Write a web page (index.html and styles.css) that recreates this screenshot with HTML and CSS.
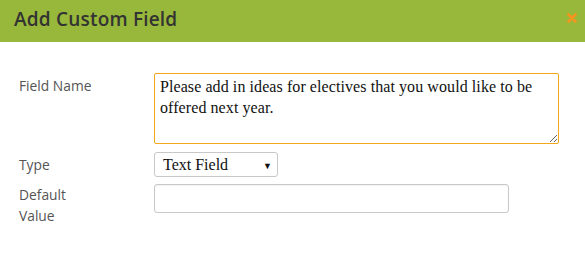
FILE: index.html
```html
<!DOCTYPE html>
<html lang="en">
<head>
    <meta charset="UTF-8">
    <title>Add Custom Field</title>
    <link rel="stylesheet" href="styles.css">
</head>
<body>
    <div class="modal">
        <div class="modal-header">
            <h1>Add Custom Field</h1>
            <svg class="close" width="10" height="10" viewBox="0 0 10 10">
                <path d="M1.5 1.5 L8.5 8.5 M8.5 1.5 L1.5 8.5" stroke="#f7941d" stroke-width="2.6" stroke-linecap="round"/>
            </svg>
        </div>

        <form class="modal-body">
            <label class="field-label" for="field-name">Field Name</label>
            <textarea id="field-name" class="field-name">Please add in ideas for electives that you would like to be offered next year.</textarea>

            <label class="field-label" for="field-type">Type</label>
            <div class="select-wrap">
                <select id="field-type" class="field-type">
                    <option>Text Field</option>
                    <option>Checkbox</option>
                    <option>Dropdown</option>
                </select>
            </div>

            <label class="field-label" for="default-value">Default Value</label>
            <input id="default-value" class="default-value" type="text">
        </form>
    </div>
</body>
</html>
```

FILE: styles.css
```css
* {
    margin: 0;
    padding: 0;
    box-sizing: border-box;
}

body {
    font-family: 'Open Sans', Lato, sans-serif;
    background: white;
    width: 585px;
    height: 256px;
    overflow: hidden;
}

.modal-header {
    height: 42px;
    background: #97b83a;
    padding: 0 8px 0 14px;
    display: flex;
    align-items: center;
    justify-content: space-between;
}

.modal-header h1 {
    font-size: 19px;
    font-weight: 600;
    letter-spacing: 0.2px;
    color: #333;
    margin-top: -4px;
}

.close {
    margin-top: -6px;
}

.modal-body {
    display: grid;
    grid-template-columns: 135px auto;
    align-items: start;
    justify-items: start;
    padding: 31px 0 0 19px;
}

.field-label {
    font-size: 13.8px;
    color: #555;
    line-height: 21px;
    width: 80px;
    padding-top: 2px;
}

.field-name {
    width: 405px;
    height: 71px;
    border: 1px solid #f4a61c;
    border-radius: 2px;
    padding: 2px 5px;
    font-family: 'Liberation Serif', serif;
    font-size: 16px;
    letter-spacing: 0.08px;
    line-height: 21px;
    color: #111;
    outline: none;
}

.field-name + .field-label,
.field-name + .field-label + .select-wrap {
    margin-top: 8px;
}

.select-wrap {
    position: relative;
}

.select-wrap::after {
    content: "\25BC";
    position: absolute;
    right: 6px;
    top: 7px;
    font-size: 9px;
    color: #111;
    pointer-events: none;
}

.field-type {
    appearance: none;
    width: 124px;
    height: 25px;
    border: 1px solid #c8c8c8;
    border-radius: 3px;
    background: white;
    padding: 0 8px;
    font-family: 'Liberation Serif', serif;
    font-size: 16px;
    color: #111;
}

.select-wrap + .field-label {
    margin-top: 5px;
}

.select-wrap + .field-label + .default-value {
    margin-top: 7px;
}

.default-value {
    width: 355px;
    height: 29px;
    border: 1px solid #c8c8c8;
    border-radius: 3px;
    box-shadow: inset 0 1px 2px rgba(0,0,0,0.06);
    outline: none;
}
```
